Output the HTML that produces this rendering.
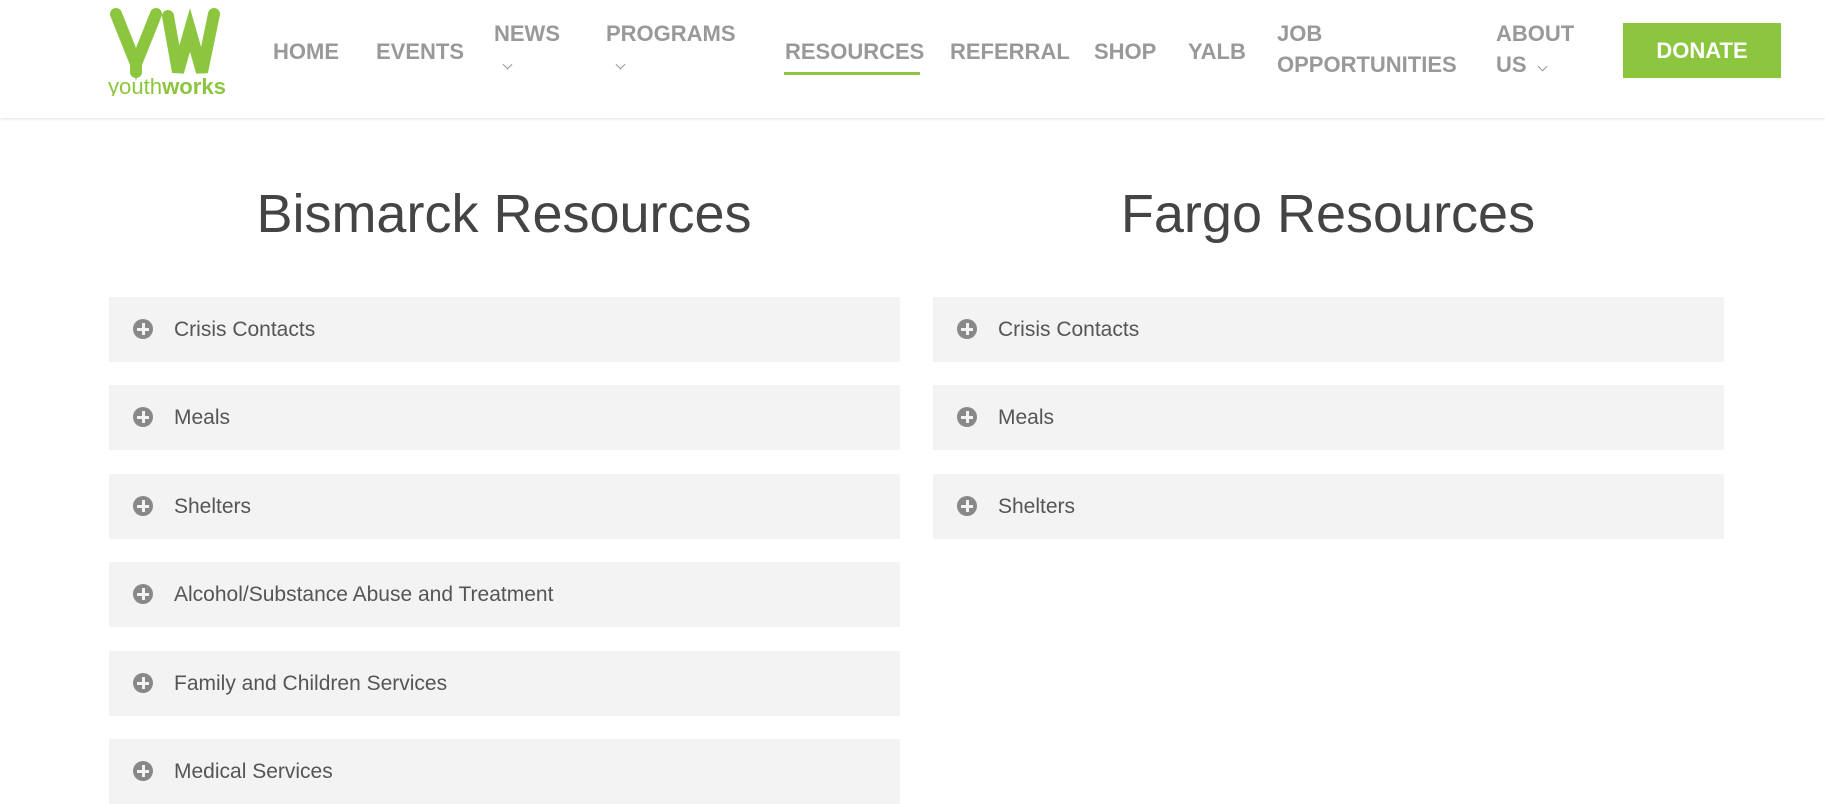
<!DOCTYPE html>
<html><head><meta charset="utf-8"><style>
*{margin:0;padding:0;box-sizing:border-box}
body{width:1825px;height:804px;overflow:hidden;background:#fff;font-family:"Liberation Sans",sans-serif;position:relative}
.hdr{position:absolute;left:0;top:0;width:1825px;height:118px;background:#fff;box-shadow:0 1px 3px rgba(0,0,0,0.12)}
.nav{position:absolute;font-size:22px;font-weight:bold;color:#999;line-height:31px;white-space:nowrap}
.chev{position:absolute;width:7px;height:7px;border-right:1.5px solid #999;border-bottom:1.5px solid #999;transform:rotate(45deg)}
.don{position:absolute;left:1623px;top:23px;width:158px;height:55px;background:#8cc63f;color:#fff;font-weight:bold;font-size:22px;text-align:center;line-height:55px}
h2{position:absolute;font-weight:normal;font-size:54px;color:#444;text-align:center;width:800px;top:183px}
.row{position:absolute;height:65px;width:791px;background:#f3f3f3;font-size:21px;color:#555;line-height:65px;padding-left:65px}
.row i{position:absolute;left:24px;top:22px;width:20px;height:20px;border-radius:50%;background:#888}
.row i:before{content:"";position:absolute;left:4px;top:8.5px;width:12px;height:3px;background:#f3f3f3}
.row i:after{content:"";position:absolute;left:8.5px;top:4px;width:3px;height:12px;background:#f3f3f3}
</style></head><body>
<div class="hdr">
<svg style="position:absolute;left:108px;top:6px" width="120" height="90" viewBox="0 0 120 90">
<g stroke="#8cc63f" stroke-width="12" stroke-linecap="round" fill="none">
<path d="M8 8 L28 58 L48 8"/>
<path d="M28 58 L28 66"/>
<path d="M60 10 L70 66 L82 24 L94 66 L106 8"/>
</g>
<text x="0" y="88" font-family="Liberation Sans" font-size="22" fill="#8cc63f" textLength="118" lengthAdjust="spacingAndGlyphs">youth<tspan font-weight="bold">works</tspan></text>
</svg>
<div class="nav" style="left:273px;top:36px">HOME</div>
<div class="nav" style="left:376px;top:36px">EVENTS</div>
<div class="nav" style="left:494px;top:18px">NEWS</div>
<div class="chev" style="left:504px;top:61px"></div>
<div class="nav" style="left:606px;top:18px">PROGRAMS</div>
<div class="chev" style="left:617px;top:61px"></div>
<div class="nav" style="left:785px;top:36px">RESOURCES</div>
<div style="position:absolute;left:784px;top:72px;width:136px;height:3px;background:#8cc63f"></div>
<div class="nav" style="left:950px;top:36px">REFERRAL</div>
<div class="nav" style="left:1094px;top:36px">SHOP</div>
<div class="nav" style="left:1188px;top:36px">YALB</div>
<div class="nav" style="left:1277px;top:18px">JOB<br>OPPORTUNITIES</div>
<div class="nav" style="left:1496px;top:18px">ABOUT<br>US</div>
<div class="chev" style="left:1539px;top:63px"></div>
<div class="don">DONATE</div>
</div>
<h2 style="left:104px">Bismarck Resources</h2>
<h2 style="left:928px">Fargo Resources</h2>
<div class="row" style="left:109px;top:297px"><i></i>Crisis Contacts</div>
<div class="row" style="left:109px;top:385px"><i></i>Meals</div>
<div class="row" style="left:109px;top:474px"><i></i>Shelters</div>
<div class="row" style="left:109px;top:562px"><i></i>Alcohol/Substance Abuse and Treatment</div>
<div class="row" style="left:109px;top:651px"><i></i>Family and Children Services</div>
<div class="row" style="left:109px;top:739px"><i></i>Medical Services</div>
<div class="row" style="left:933px;top:297px"><i></i>Crisis Contacts</div>
<div class="row" style="left:933px;top:385px"><i></i>Meals</div>
<div class="row" style="left:933px;top:474px"><i></i>Shelters</div>
</body></html>
